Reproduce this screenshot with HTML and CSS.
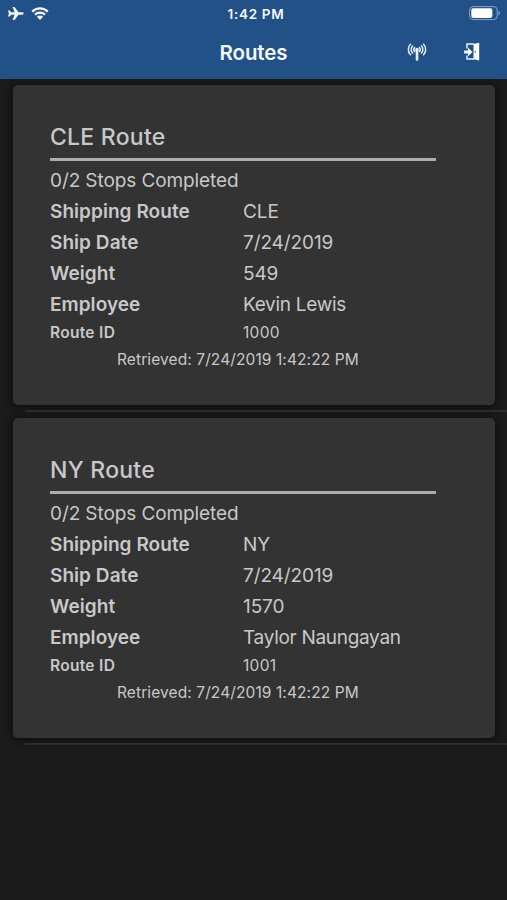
FILE: index.html
```html
<!DOCTYPE html>
<html lang="en">
<head>
<meta charset="utf-8">
<title>Routes</title>
<link rel="stylesheet" href="styles.css">
</head>
<body>
<header class="header">
  <div class="status">
    <div class="status-left">
      <svg width="16" height="14" viewBox="0 0 16 14" fill="#f4f8ff"><path d="M15.600 6.500c0-.8-.7-1.200-1.600-1.200h-3.500L6.500 0H4.600l2 5.300H3.200L1.600 3.500H0l.9 3-.9 3h1.600l1.600-1.800h3.400l-2 5.300h1.900l4-5.300H14c.9 0 1.600-.4 1.600-1.200z"/></svg>
      <svg width="18" height="14" viewBox="0 0 18 14" fill="none" stroke="#f4f8ff" stroke-width="2.200"><path d="M1.200 4.600a11.100 11.100 0 0 1 15.600 0M4 7.600a7.100 7.100 0 0 1 10 0"/><path d="M9 12.900 5.900 9.700a4.400 4.400 0 0 1 6.200 0z" fill="#f4f8ff" stroke="none"/></svg>
    </div>
    <div class="clock">1:42 PM</div>
    <div class="status-right">
      <svg width="32" height="15" viewBox="0 0 32 15"><rect x=".6" y=".6" width="27.600" height="13" rx="3.500" fill="none" stroke="#86a5ca" stroke-width="1"/><rect x="2.300" y="2.300" width="21" height="9.600" rx="1.800" fill="#fff"/><path d="M29.500 4.800c2 .9 2 3.700 0 4.600z" fill="#86a5ca"/></svg>
    </div>
  </div>
  <div class="navbar">
    <h1 class="nav-title">Routes</h1>
    <div class="actions">
      <svg width="20" height="20" viewBox="0 0 20 20" fill="none" stroke="#e6effa" stroke-width="1.500" stroke-linecap="round"><path d="M3.500 2.300c-2.900 2.700-2.900 7.700 0 10.400M5.600 4c-1.900 1.900-1.900 5.100 0 7M7.600 5.500c-1 1.200-1 2.800 0 4M16.500 2.300c2.900 2.700 2.900 7.700 0 10.400M14.400 4c1.900 1.900 1.900 5.100 0 7M12.400 5.500c1 1.200 1 2.800 0 4"/><circle cx="10" cy="7.500" r="1.700" fill="#e6effa" stroke="none"/><path d="M10 8v9.500" stroke-width="2.600"/></svg>
      <svg width="18" height="20" viewBox="0 0 18 20"><path d="M4 6.500V2h7M4 13.500V17h7" fill="none" stroke="#e6effa" stroke-width="1.500"/><path d="M10.500 2 16.200.8v17.600l-5.700-1.200z" fill="#fff"/><path d="M1.200 8.500h3.800V5.700L9.500 10 5 14.300v-2.800H1.200z" fill="#fff"/><circle cx="12.300" cy="9.800" r=".8" fill="#225187"/></svg>
    </div>
  </div>
</header>
<main class="list">
  <section class="item">
    <article class="card">
      <h2 class="card-title">CLE Route</h2>
      <p class="row"><span class="stops">0/2 Stops Completed</span></p>
      <dl class="fields">
        <div class="row"><dt>Shipping Route</dt><dd>CLE</dd></div>
        <div class="row"><dt>Ship Date</dt><dd>7/24/2019</dd></div>
        <div class="row"><dt>Weight</dt><dd>549</dd></div>
        <div class="row"><dt>Employee</dt><dd class="name">Kevin Lewis</dd></div>
        <div class="row small"><dt>Route ID</dt><dd>1000</dd></div>
      </dl>
      <p class="retrieved">Retrieved: 7/24/2019 1:42:22 PM</p>
    </article>
  </section>
  <section class="item">
    <article class="card">
      <h2 class="card-title">NY Route</h2>
      <p class="row"><span class="stops">0/2 Stops Completed</span></p>
      <dl class="fields">
        <div class="row"><dt>Shipping Route</dt><dd>NY</dd></div>
        <div class="row"><dt>Ship Date</dt><dd>7/24/2019</dd></div>
        <div class="row"><dt>Weight</dt><dd>1570</dd></div>
        <div class="row"><dt>Employee</dt><dd class="name">Taylor Naungayan</dd></div>
        <div class="row small"><dt>Route ID</dt><dd>1001</dd></div>
      </dl>
      <p class="retrieved">Retrieved: 7/24/2019 1:42:22 PM</p>
    </article>
  </section>
</main>
</body>
</html>
```
FILE: styles.css
```css
* { box-sizing: border-box; margin: 0; padding: 0; }
body {
  min-height: 900px;
  background: #1b1b1b;
  color: #c8c8c8;
  font-family: Inter, "Liberation Sans", sans-serif;
  overflow: hidden;
}
svg { display: block; }
.header { height: 79px; background: #225187; color: #f4f8ff; }
.status {
  height: 27px;
  display: grid;
  grid-template-columns: 1fr auto 1fr;
  align-items: center;
  padding: 0 6px 0 9px;
}
.status-left { display: flex; gap: 7px; margin-left: -1px; }
.status-right { display: flex; justify-content: flex-end; }
.clock { font-size: 13.5px; font-weight: 600; letter-spacing: 0.7px; padding-left: 2px; }
.navbar {
  height: 50px;
  display: grid;
  grid-template-columns: 1fr auto 1fr;
  align-items: center;
}
.nav-title { grid-column: 2; font-size: 20.5px; font-weight: 600; letter-spacing: -0.1px; }
.actions { display: flex; justify-content: flex-end; gap: 36px; padding-right: 26px; }
.list { padding-top: 6px; }
.item { height: 333px; padding: 0 12px 0 13px; }
.item::after {
  content: "";
  display: block;
  height: 2px;
  margin: 5px -12px 0 12px;
  background: #2e2e2e;
}
.card {
  height: 320px;
  padding: 35px 59px 0 37px;
  background: #333;
  border-radius: 5px;
  box-shadow: 0 1px 7px 2px #101010;
}
.card-title {
  height: 41px;
  padding-top: 2px;
  line-height: 30px;
  border-bottom: 3px solid #adadad;
  font-size: 23px;
  font-weight: 550;
  letter-spacing: 0.25px;
  margin-bottom: 4px;
}
.row {
  height: 31px;
  line-height: 31px;
  display: grid;
  grid-template-columns: 193px 1fr;
  font-size: 19px;
  letter-spacing: -0.1px;
  white-space: nowrap;
}
.name { letter-spacing: -0.3px; }
dt { font-weight: 600; letter-spacing: 0.05px; }
.small { height: 26px; line-height: 26px; font-size: 15.5px; letter-spacing: 0.3px; }
.small dt { letter-spacing: 0.3px; }
.retrieved {
  padding-left: 67px;
  line-height: 27px;
  font-size: 15.5px;
  letter-spacing: 0.1px;
  white-space: nowrap;
}
```
